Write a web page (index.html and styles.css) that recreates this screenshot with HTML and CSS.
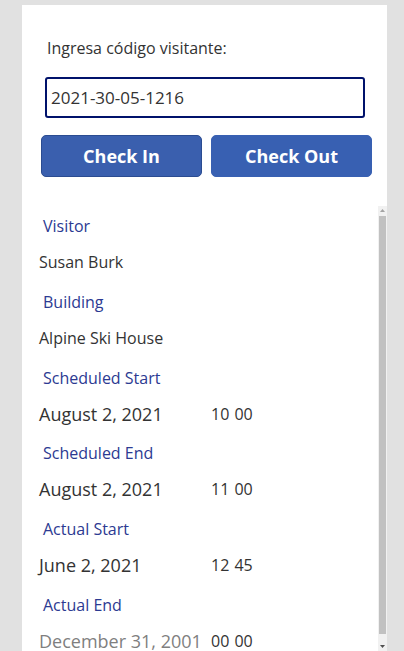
FILE: index.html
```html
<!DOCTYPE html>
<html lang="es">
<head>
<meta charset="utf-8">
<title>Visitor check-in</title>
<link rel="stylesheet" href="styles.css">
</head>
<body>
<div class="panel">
  <div class="prompt">Ingresa código visitante:</div>
  <input class="code-input" type="text" value="2021-30-05-1216" readonly>
  <div class="actions">
    <button class="btn btn-active">Check In</button>
    <button class="btn">Check Out</button>
  </div>
  <div class="list">
    <div class="fields">
      <div class="field">
        <div class="field-label">Visitor</div>
        <div class="field-value">Susan Burk</div>
      </div>
      <div class="field">
        <div class="field-label">Building</div>
        <div class="field-value">Alpine Ski House</div>
      </div>
      <div class="field">
        <div class="field-label">Scheduled Start</div>
        <div class="field-value datetime"><span class="date">August 2, 2021</span><span class="time">10 00</span></div>
      </div>
      <div class="field">
        <div class="field-label">Scheduled End</div>
        <div class="field-value datetime"><span class="date">August 2, 2021</span><span class="time">11 00</span></div>
      </div>
      <div class="field">
        <div class="field-label">Actual Start</div>
        <div class="field-value datetime"><span class="date">June 2, 2021</span><span class="time">12 45</span></div>
      </div>
      <div class="field">
        <div class="field-label">Actual End</div>
        <div class="field-value datetime"><span class="date date-empty">December 31, 2001</span><span class="time">00 00</span></div>
      </div>
    </div>
    <div class="scrollbar">
      <div class="sb-btn sb-up"><svg width="5" height="3" viewBox="0 0 5 3"><polygon points="2.5,0 5,3 0,3" fill="#a3a3a3"/></svg></div>
      <div class="sb-thumb"></div>
      <div class="sb-btn sb-down"><svg width="5" height="3" viewBox="0 0 5 3"><polygon points="0,0 5,0 2.5,3" fill="#505050"/></svg></div>
    </div>
  </div>
</div>
</body>
</html>
```

FILE: styles.css
```css
html, body {
  margin: 0;
  padding: 0;
  height: 100%;
  overflow: hidden;
}

body {
  background: #e1e1e1;
  font-family: "Open Sans", "Noto Sans", sans-serif;
  color: #333333;
}

.panel {
  margin: 5px 0 0 22px;
  width: 365px;
  height: 646px;
  background: #ffffff;
  display: flex;
  flex-direction: column;
}

.prompt {
  margin: 32px 0 0 25px;
  font-size: 16px;
  line-height: 22px;
  color: #333333;
}

.code-input {
  display: block;
  margin: 18px 0 0 23px;
  width: 320px;
  height: 41px;
  box-sizing: border-box;
  border: 2px solid #00126b;
  border-radius: 3px;
  padding: 0 4px;
  font-family: "Open Sans", "Noto Sans", sans-serif;
  font-size: 17px;
  color: #333333;
  background: #ffffff;
  outline: none;
}

.actions {
  display: flex;
  gap: 9px;
  margin: 17px 0 0 19px;
}

.btn {
  width: 161px;
  height: 42px;
  box-sizing: border-box;
  border: 1px solid #3860b2;
  border-radius: 5px;
  background: #3860b2;
  color: #ffffff;
  font-family: "Open Sans", "Noto Sans", sans-serif;
  font-weight: 700;
  font-size: 18px;
  padding: 0;
  cursor: pointer;
}

.btn-active {
  border-color: #2b4c91;
  background: #3a5fae;
}

.list {
  flex: 1;
  margin-top: 29px;
  display: flex;
  overflow: hidden;
}

.fields {
  flex: 1;
  padding-top: 1px;
}

.field {
  margin-bottom: 2.8px;
}

.field-label {
  padding-left: 21px;
  font-size: 16px;
  line-height: 38px;
  height: 38px;
  color: #2c3a92;
}

.field-value {
  padding-left: 17px;
  font-size: 16px;
  line-height: 35px;
  height: 35px;
  color: #333333;
  white-space: nowrap;
}

.datetime {
  display: flex;
}

.date {
  width: 172px;
  font-size: 18px;
}

.date-empty {
  color: #7f7f7f;
}

.time {
  font-size: 16px;
  word-spacing: 1px;
}

.scrollbar {
  width: 9px;
  background: #f1f1f1;
  display: flex;
  flex-direction: column;
  align-items: center;
}

.sb-btn {
  display: flex;
  justify-content: center;
}

.sb-btn svg {
  display: block;
}

.sb-up {
  height: 10px;
  padding-top: 3px;
  box-sizing: border-box;
}

.sb-thumb {
  width: 7px;
  height: 418px;
  background: #c1c1c1;
}

.sb-down {
  flex: 1;
  padding-top: 11px;
}
```
